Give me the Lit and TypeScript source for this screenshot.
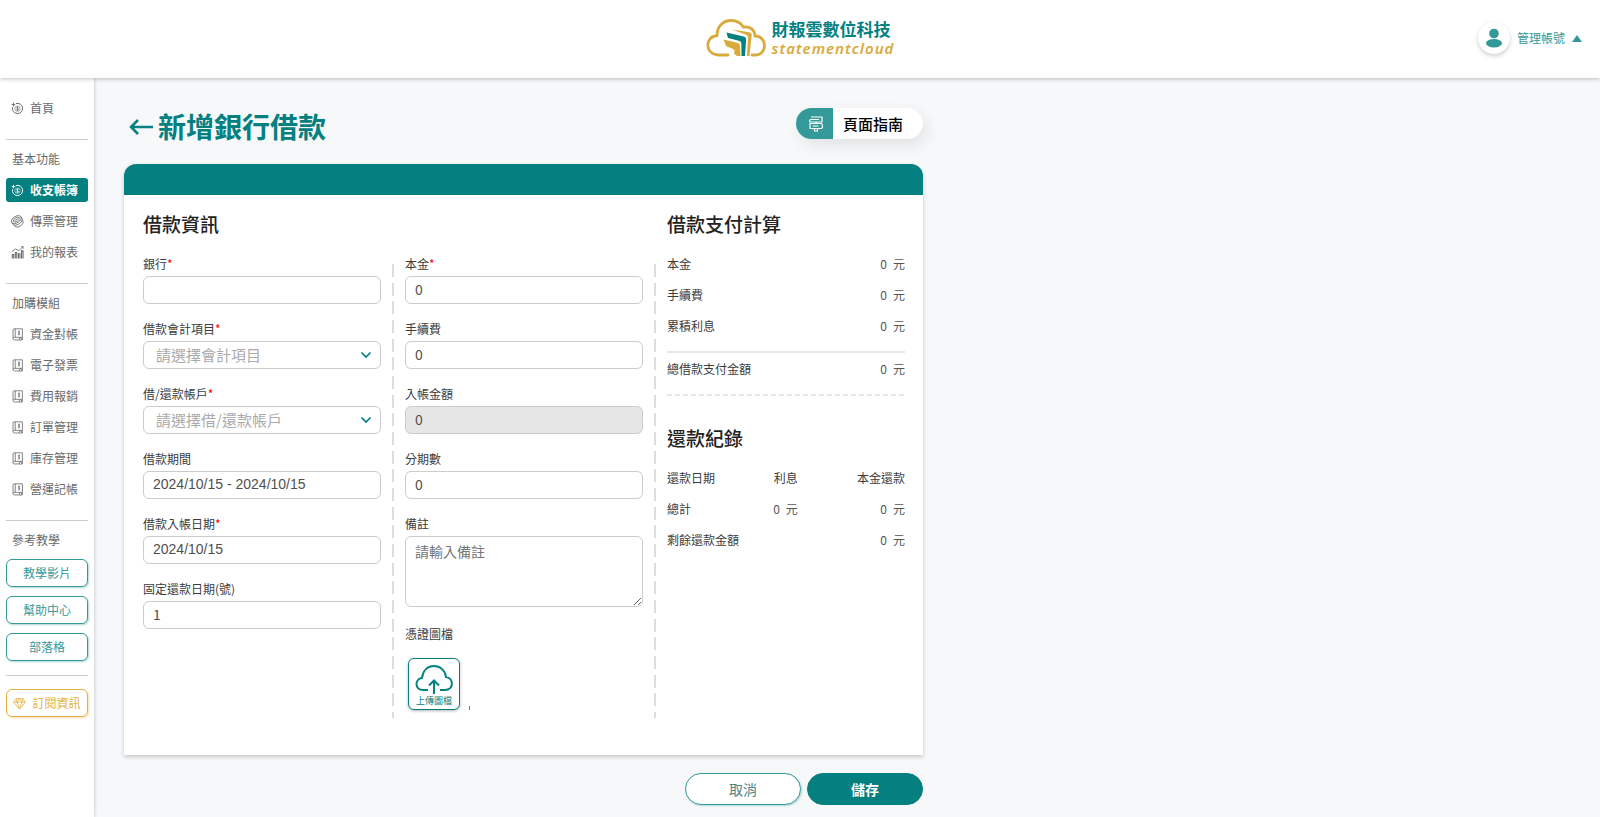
import { LitElement, html, svg, css, nothing, TemplateResult } from "lit";
import { customElement, state } from "lit/decorators.js";
import { classMap } from "lit/directives/class-map.js";

const icons: Record<string, TemplateResult> = {
  money: svg`<path d="M6 2A6.300 6.300 0 1 1 1.900 6.500" stroke-width="1.200" /><path d="M.8 3.200h4.400M3 1v4.400" stroke-width="1.200" />
    <circle cx="8" cy="8.200" r="3.300" stroke-width=".7" />
    <path d="M9.400 7C9 6.300 6.800 6.200 6.800 7.300S9.300 8.200 9.300 9.300 7 10.200 6.600 9.400M8 5.600v5.200" stroke-width=".9" />`,
  coins: svg`<g transform="rotate(-32 8 8)"><ellipse cx="8" cy="5.200" rx="6.600" ry="4" /><ellipse cx="8" cy="5.200" rx="4.200" ry="2.200" />
    <path d="M1.400 5.200v2.400c0 2.200 3 4 6.600 4s6.600-1.800 6.600-4V5.200M2 9v1.600c0 2.200 2.700 4 6 4s6-1.800 6-4V9M6 5.200h4" /></g>`,
  chart: svg`<path d="M1.500 15.500v-5h1.800v5M5.300 15.500v-7.500h1.800v7.500M9.200 15.500v-6h1.800v6M13 15.500v-9.500h1.800v9.500" stroke-width="1.300" />
    <path d="M.8 7L5.500 3.600l4.200 2.200L14.600 1M12.200.800h2.800v2.600" />`,
  book: svg`<path d="M2.500 12.700V2.400C2.500 1.500 3 1 4 1h10v10.500H4.200C2 11.500 2 14.700 4.200 14.700h6.200M14 11.500v3.200h-1.200M5.200 1v10.500" />
    <circle cx="11.600" cy="13.700" r="1.500" /><path d="M10.900 4.300c-1.600-.8-2.600 1-1 1.700s.8 2.500-1 1.700M9.800 3.200v6" />`,
  diamond: svg`<path d="M4 2h8l3.300 4.300L8 14.800.700 6.300zM.700 6.300h14.600M5 6.300L8 14.500l3-8.200M4 2l1 4.300L8 2l3 4.300L12 2" />`,
};

const icon = (name: string) => html`<svg class="icon" viewBox="0 0 16 16" aria-hidden="true">${icons[name]}</svg>`;

interface NavItem { text: string; icon: string; active?: boolean }
interface Field {
  id: string; label: string; value?: string; required?: boolean;
  disabled?: boolean; placeholder?: string; kind?: "select" | "date";
}

@customElement("app-root")
export class AppRoot extends LitElement {
  static styles = css`
    :host {
      display: flex;
      flex-direction: column;
      min-height: 100vh;
      background: #f7f8fa;
      color: #3c3c3c;
      font: 12px/16px "Noto Sans CJK TC", sans-serif;
      --teal: #048080;
      --teal-soft: #339999;
      --gold: #e5b13c;
    }
    * { box-sizing: border-box; }
    h1, h2, dl, dd, ul { margin: 0; padding: 0; }
    ul { list-style: none; }
    a { color: inherit; text-decoration: none; }
    button, input, select, textarea { font-family: inherit; margin: 0; }
    button { cursor: pointer; }
    svg { display: block; fill: none; stroke: currentColor; flex: none; }

    .header {
      display: grid;
      grid-template-columns: 1fr auto 1fr;
      align-items: center;
      height: 78px;
      padding: 0 18px 2px;
      background: #fff;
      box-shadow: 0 1px 4px rgba(0, 0, 0, 0.25);
      z-index: 2;
    }
    .logo { grid-column: 2; display: flex; align-items: center; gap: 6px; }
    .logo-mark { width: 60px; height: 40px; stroke: none; }
    .brand { display: flex; flex-direction: column; }
    .brand-name { color: var(--teal); font-size: 17px; line-height: 20px; font-weight: 700; }
    .brand-sub {
      color: #d9aa3c;
      font: italic 600 15px/18px "Noto Sans", sans-serif;
      letter-spacing: 1px;
    }
    .account {
      justify-self: end;
      display: flex;
      align-items: center;
      gap: 7px;
      padding: 0;
      border: 0;
      background: none;
      color: var(--teal-soft);
      font-size: 12px;
      line-height: 16px;
    }
    .avatar {
      display: grid;
      place-items: center;
      width: 32px;
      height: 32px;
      border-radius: 50%;
      background: #fff;
      box-shadow: 0 2px 4px rgba(0, 0, 0, 0.2);
    }
    .avatar svg { width: 16px; height: 20px; fill: currentColor; stroke: none; }
    .caret { width: 10px; height: 7px; fill: var(--teal-soft); stroke: none; }

    .body { display: flex; flex: 1; }
    .sidebar {
      width: 94px;
      flex: none;
      padding: 18px 6px;
      background: #fff;
      box-shadow: 1px 0 3px rgba(0, 0, 0, 0.16);
      color: #6a6a6a;
    }
    .nav-list { display: flex; flex-direction: column; gap: 7px; }
    .nav-link {
      display: flex;
      align-items: center;
      gap: 6px;
      height: 24px;
      padding: 0 5px;
      border-radius: 3px;
      white-space: nowrap;
    }
    .icon { width: 13px; height: 13px; }
    .nav-link.active { background: var(--teal); color: #fff; font-weight: 700; }
    .divider { border: 0; border-top: 1px solid #ccc; margin: 19px 0 10px; }
    .group { padding: 0 6px; margin-bottom: 10px; line-height: 18px; }
    .side-buttons { display: flex; flex-direction: column; gap: 9px; }
    .side-button {
      display: flex;
      align-items: center;
      justify-content: center;
      gap: 6px;
      height: 28px;
      border: 1px solid var(--teal-soft);
      border-radius: 6px;
      color: var(--teal-soft);
      box-shadow: 1px 1px 2px rgba(51, 153, 153, 0.4);
      white-space: nowrap;
    }
    .side-button.gold { border-color: var(--gold); color: var(--gold); box-shadow: 1px 1px 2px rgba(229, 177, 60, 0.4); }
    .divider.tight { margin: 14px 0 13px; }

    .main { flex: 1; padding: 30px 30px 12px; min-width: 0; }
    .page { max-width: 799px; }
    .title-row { display: flex; justify-content: space-between; align-items: flex-start; height: 56px; }
    .title { display: flex; align-items: center; gap: 4px; padding-left: 4px; color: var(--teal); }
    .title h1 { font-size: 28px; line-height: 37px; font-weight: 700; }
    .back { display: block; }
    .back svg { width: 26px; height: 18px; stroke-width: 2.500; }
    .guide {
      display: flex;
      height: 31px;
      padding: 0;
      border: 0;
      border-radius: 16px;
      overflow: hidden;
      background: #fff;
      color: #000;
      font-size: 15px;
      font-weight: 500;
      box-shadow: 4px 6px 16px rgba(0, 0, 0, 0.09);
    }
    .guide-icon { display: grid; place-items: center; width: 37px; height: 31px; padding-left: 4px; background: var(--teal-soft); color: #fff; }
    .guide-icon svg { width: 16px; height: 16px; }
    .guide-text { padding: 0 20px 0 10px; line-height: 32px; }

    .card { background: #fff; border-radius: 12px 12px 0 0; box-shadow: 0 2px 4px rgba(0, 0, 0, 0.2); }
    .card-top { height: 31px; background: var(--teal); border-radius: 12px 12px 0 0; }
    .form {
      display: grid;
      grid-template-columns: 1fr 2px 1fr 2px 1fr;
      column-gap: 11px;
      padding: 18px 18px 37px 19px;
    }
    h2 { font-size: 19px; line-height: 22px; font-weight: 500; color: #222; margin-bottom: 21px; }
    .rule {
      margin-top: 51px;
      background: repeating-linear-gradient(#dedede 0 13px, transparent 13px 19px, #dedede 19px 32px, transparent 32px 37px, #dedede 37px 50px, transparent 50px 56px);
    }
    .fields { display: flex; flex-direction: column; gap: 17px; }
    .offset { margin-top: 43px; padding-bottom: 8px; }
    .field { display: flex; flex-direction: column; gap: 4px; }
    .required { color: #f00; }
    .control {
      width: 100%;
      height: 28px;
      padding: 0 9px 2px;
      border: 1px solid #ccc;
      border-radius: 6px;
      background: #fff;
      color: #505050;
      font-size: 14px;
      line-height: 20px;
      outline: none;
    }
    .control:focus { border-color: var(--teal-soft); }
    .control:disabled { background: #e6e6e6; }
    .control.date { font-family: "Liberation Sans", sans-serif; }
    .select { display: grid; align-items: center; }
    .select > * { grid-area: 1 / 1; }
    .select svg { justify-self: end; width: 12px; height: 8px; margin-right: 9px; color: var(--teal); stroke-width: 1.700; pointer-events: none; }
    .select .control { appearance: none; padding: 0 24px 0 12px; color: #aaa; font-size: 15px; }
    textarea.control { display: block; height: 71px; padding: 4px 9px; resize: both; }
    textarea::placeholder { color: #757575; }
    .upload-field { display: flex; flex-direction: column; gap: 16px; margin-top: 2px; }
    .upload-row { display: flex; align-items: flex-end; gap: 9px; padding-left: 3px; }
    .upload {
      display: flex;
      flex-direction: column;
      align-items: center;
      width: 52px;
      height: 52px;
      padding: 5px 0 0;
      border: 1px solid var(--teal);
      border-radius: 6px;
      background: #fff;
      color: var(--teal);
      font-size: 9px;
      line-height: 11px;
      font-weight: 400;
      box-shadow: 0 1px 3px rgba(0, 0, 0, 0.3);
    }
    .upload svg { width: 38px; height: 31px; stroke-width: 2; }
    .upload-mark { width: 1px; height: 4px; background: var(--teal-soft); }

    .sums { display: flex; flex-direction: column; gap: 15px; }
    .sum { display: flex; justify-content: space-between; }
    .unit { margin-left: 6px; }
    .amount { color: #555; white-space: nowrap; }
    .dashes { height: 2px; margin: 17px 0 31px; background: repeating-linear-gradient(90deg, #e6e6e6 0 5px, transparent 5px 8px); }
    .line { height: 2px; margin: 17px 0 8px; background: #e6e6e6; }
    .records { width: 100%; border-collapse: collapse; table-layout: fixed; }
    .records th, .records td { padding: 0 0 15px; font-weight: 400; text-align: right; white-space: nowrap; }
    .records th:first-child { text-align: left; }
    .col-date { width: 40%; }
    .col-interest { width: 15%; }

    .actions { display: flex; justify-content: flex-end; gap: 6px; margin-top: 18px; }
    .action {
      width: 116px;
      height: 32px;
      border: 1px solid var(--teal);
      border-radius: 16px;
      background: var(--teal);
      color: #fff;
      font-size: 14px;
      line-height: 20px;
      font-weight: 700;
      padding: 0;
    }
    .action.plain { background: #fff; border-color: var(--teal-soft); color: #4c8484; font-weight: 400; box-shadow: 1px 1px 2px rgba(51, 153, 153, 0.35); }
  `;

  @state() private values: Record<string, string> = {
    bank: "", period: "2024/10/15 - 2024/10/15", entry: "2024/10/15", day: "1",
    principal: "0", fee: "0", income: "0", terms: "0",
  };

  private basics: NavItem[] = [
    { text: "收支帳簿", icon: "money", active: true },
    { text: "傳票管理", icon: "coins" },
    { text: "我的報表", icon: "chart" },
  ];
  private modules: NavItem[] = ["資金對帳", "電子發票", "費用報銷", "訂單管理", "庫存管理", "營運記帳"]
    .map((text) => ({ text, icon: "book" }));
  private loanFields: Field[] = [
    { id: "bank", label: "銀行", required: true },
    { id: "subject", label: "借款會計項目", required: true, kind: "select", placeholder: "請選擇會計項目" },
    { id: "account", label: "借/還款帳戶", required: true, kind: "select", placeholder: "請選擇借/還款帳戶" },
    { id: "period", label: "借款期間", kind: "date" },
    { id: "entry", label: "借款入帳日期", required: true, kind: "date" },
    { id: "day", label: "固定還款日期(號)" },
  ];
  private amountFields: Field[] = [
    { id: "principal", label: "本金", required: true },
    { id: "fee", label: "手續費" },
    { id: "income", label: "入帳金額", disabled: true },
    { id: "terms", label: "分期數" },
  ];

  private nav(items: NavItem[]) {
    return html`<ul class="nav-list">${items.map((item) => html`
      <li><a href="#" class=${classMap({ "nav-link": true, active: !!item.active })}>${icon(item.icon)}<span>${item.text}</span></a></li>`)}</ul>`;
  }

  private onInput(id: string, event: Event) {
    this.values = { ...this.values, [id]: (event.target as HTMLInputElement).value };
  }

  private field(f: Field) {
    return html`<div class="field">
      <label for=${f.id}>${f.label}${f.required ? html`<span class="required">*</span>` : nothing}</label>
      ${f.kind === "select"
        ? html`<div class="select">
            <select class="control" id=${f.id}><option>${f.placeholder}</option></select>
            <svg viewBox="0 0 12 8" aria-hidden="true"><path d="M1.500 1.500L6 6l4.500-4.500" /></svg>
          </div>`
        : html`<input id=${f.id} type="text" class=${classMap({ control: true, date: f.kind === "date" })}
            .value=${this.values[f.id]} ?disabled=${!!f.disabled} @input=${(e: Event) => this.onInput(f.id, e)} />`}
    </div>`;
  }

  private amount() {
    return html`<span class="amount">0<span class="unit">元</span></span>`;
  }

  private sum(label: string) {
    return html`<div class="sum"><dt>${label}</dt><dd>${this.amount()}</dd></div>`;
  }

  render() {
    return html`
      <header class="header">
        <a class="logo" href="#">
          <svg class="logo-mark" viewBox="0 0 60 40" aria-hidden="true">
            <path d="M22 37H12.500C-1.500 36.500-1.500 18.500 11 17.500C11 8 17.500 2.500 25 2.500c6 0 10 2.800 12.500 6.500c6.500-1 11.500 3 11.500 9c5.500 0 9.500 4 9.500 9.500c0 5.800-4 9.500-9.500 9.500H46" fill="none" stroke="#d9aa3c" stroke-width="2.800" stroke-linecap="round" />
            <path d="M26 11.500l17.500 2.800c1.800.400 2.300 1.200 2.200 2.700L43.500 38H41l1-18.500c0-1.500-.5-2.500-2.500-3z" fill="#d9aa3c" />
            <path d="M20.500 14.500l17 4c2 .600 2.700 1.500 2.600 3.200L39 38h-3.500l-.2-12.500c0-1.500-.8-2.300-2.300-2.700l-11-2.800z" fill="#048080" />
            <path d="M17.500 21.500l13.500 3.300c2 .500 3 1.500 3 3.200L34.500 38H31l-3-2.500.5-2.500c0-1-.5-1.500-1.500-2l-7-3z" fill="#d9aa3c" />
          </svg>
          <span class="brand"><span class="brand-name">財報雲數位科技</span><span class="brand-sub">statementcloud</span></span>
        </a>
        <button class="account" type="button">
          <span class="avatar"><svg viewBox="0 0 16 20" aria-hidden="true"><circle cx="8" cy="5.500" r="4.800" /><ellipse cx="8" cy="15.200" rx="8" ry="4.200" /></svg></span>
          <span>管理帳號</span>
          <svg class="caret" viewBox="0 0 10 7" aria-hidden="true"><path d="M5 0l5 7H0z" /></svg>
        </button>
      </header>
      <div class="body">
        <nav class="sidebar">
          ${this.nav([{ text: "首頁", icon: "money" }])}
          <hr class="divider" />
          <div class="group">基本功能</div>
          ${this.nav(this.basics)}
          <hr class="divider" />
          <div class="group">加購模組</div>
          ${this.nav(this.modules)}
          <hr class="divider" />
          <div class="group">參考教學</div>
          <div class="side-buttons">
            ${["教學影片", "幫助中心", "部落格"].map((text) => html`<a class="side-button" href="#">${text}</a>`)}
          </div>
          <hr class="divider tight" />
          <a class="side-button gold" href="#">${icon("diamond")}<span>訂閱資訊</span></a>
        </nav>
        <main class="main">
          <div class="page">
            <div class="title-row">
              <div class="title">
                <a class="back" href="#" aria-label="返回"><svg viewBox="0 0 26 18"><path d="M25 9H3M10 2L3 9l7 7" /></svg></a>
                <h1>新增銀行借款</h1>
              </div>
              <button class="guide" type="button">
                <span class="guide-icon"><svg viewBox="0 0 16 16" aria-hidden="true">
                  <path d="M3 1h11v5H3C1 6 1 3.500 3 3.500h8M13 7.500H2v5h11c2 0 2-5 0-5M8 6v1.500M6.500 12.500V15h3v-2.500M4.500 10h6" stroke-width="1.200" /></svg></span>
                <span class="guide-text">頁面指南</span>
              </button>
            </div>
            <div class="card">
              <div class="card-top"></div>
              <form class="form" @submit=${(e: Event) => e.preventDefault()}>
                <section>
                  <h2>借款資訊</h2>
                  <div class="fields">${this.loanFields.map((f) => this.field(f))}</div>
                </section>
                <div class="rule"></div>
                <section class="fields offset">
                  ${this.amountFields.map((f) => this.field(f))}
                  <div class="field">
                    <label for="note">備註</label>
                    <textarea class="control" id="note" placeholder="請輸入備註"></textarea>
                  </div>
                  <div class="upload-field">
                    <span>憑證圖檔</span>
                    <div class="upload-row">
                      <button class="upload" type="button">
                        <svg viewBox="0 0 38 31" aria-hidden="true"><path d="M13 26H8C-.500 26-.500 15 7 14C8 6 13 2 19 2s11 4 12 11c8 1 8 13-1 13h-5M19 30V17M14 21.500L19 16.500l5 5" /></svg>
                        <span>上傳圖檔</span>
                      </button>
                      <span class="upload-mark"></span>
                    </div>
                  </div>
                </section>
                <div class="rule"></div>
                <section>
                  <h2>借款支付計算</h2>
                  <dl class="sums">${["本金", "手續費", "累積利息"].map((t) => this.sum(t))}</dl>
                  <div class="line"></div>
                  <dl>${this.sum("總借款支付金額")}</dl>
                  <div class="dashes"></div>
                  <h2>還款紀錄</h2>
                  <table class="records">
                    <thead><tr><th class="col-date" scope="col">還款日期</th><th class="col-interest" scope="col">利息</th><th scope="col">本金還款</th></tr></thead>
                    <tbody>
                      <tr><th scope="row">總計</th><td>${this.amount()}</td><td>${this.amount()}</td></tr>
                      <tr><th scope="row">剩餘還款金額</th><td></td><td>${this.amount()}</td></tr>
                    </tbody>
                  </table>
                </section>
              </form>
            </div>
            <div class="actions">
              <button class="action plain" type="button">取消</button>
              <button class="action" type="button">儲存</button>
            </div>
          </div>
        </main>
      </div>`;
  }
}
